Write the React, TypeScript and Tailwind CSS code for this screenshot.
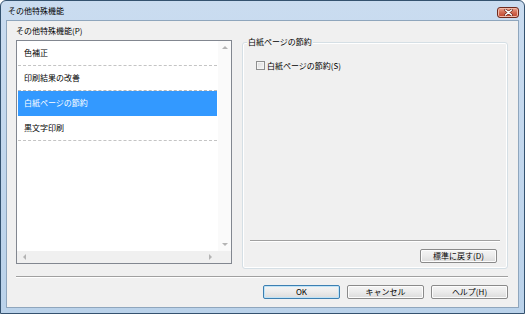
const ITEMS = ["色補正", "印刷結果の改善", "白紙ページの節約", "黒文字印刷"];
const SELECTED = 2;

const JP = "font-['Meiryo_UI','Noto_Sans_CJK_JP',sans-serif]";

function Arrow({ dir }: { dir: "up" | "down" | "left" | "right" }) {
  const pts = {
    up: "0,4 3,1 6,4",
    down: "0,1 3,4 6,1",
    left: "4,0 1,3 4,6",
    right: "1,0 4,3 1,6",
  }[dir];
  const size = dir === "up" || dir === "down" ? { w: 6, h: 5 } : { w: 5, h: 6 };
  return (
    <svg width={size.w} height={size.h} viewBox={`0 0 ${size.w} ${size.h}`}>
      <polygon points={pts} fill="#b4b4b4" />
    </svg>
  );
}

function Button({ label, primary }: { label: string; primary?: boolean }) {
  return (
    <button
      className={`w-[77px] h-[14px] flex items-center justify-center rounded-[2px] border text-[8px] leading-none text-black bg-gradient-to-b from-[#f4f4f4] via-[#ebebeb] to-[#dcdcdc] ${
        primary
          ? "border-[#3c7fb1] shadow-[inset_0_0_0_1px_#bfe3f7]"
          : "border-[#8a8a8a] shadow-[inset_0_0_0_1px_#fcfcfc]"
      }`}
    >
      {label}
    </button>
  );
}

export default function App() {
  return (
    <div
      className={`w-[525px] h-[314px] flex flex-col border border-[#34526f] rounded-t-[6px] overflow-hidden bg-gradient-to-b from-[#cadcf0] to-[#bad2ea] ${JP}`}
    >
      {/* Title bar */}
      <div className="h-[19px] flex items-start justify-between pl-[7px] pr-[5px]">
        <span className="mt-[5px] text-[8px] leading-[10px] text-black">その他特殊機能</span>
        <div className="mt-[6px] w-[22px] h-[11px] rounded-[3px] border border-[#6e2a1e] bg-gradient-to-b from-[#e9a592] via-[#d16a52] to-[#c2422a] flex items-center justify-center shadow-[inset_0_0_0_1px_#f2b9a8]">
          <svg width="9" height="7" viewBox="0 0 9 7">
            <path d="M1.5 1 L7.5 6 M7.5 1 L1.5 6" stroke="#5a1c12" strokeWidth="2.6" strokeLinecap="round" />
            <path d="M1.5 1 L7.5 6 M7.5 1 L1.5 6" stroke="#ffffff" strokeWidth="1.5" strokeLinecap="round" />
          </svg>
        </div>
      </div>

      {/* Client area */}
      <div className="flex-1 mx-[5px] mb-[5px] border border-[#8fa6bd] bg-[#f0f0f0] pt-[3px] pl-[9px] pr-[10px] flex flex-col">
        <div className="flex items-start gap-[10px]">
          {/* Left column: list */}
          <div className="w-[216px] flex flex-col">
            <div className="h-[14px] mb-[2px] text-[8px] leading-[14px] text-black">その他特殊機能(P)</div>
            <div className="h-[224px] border border-[#828790] bg-white flex flex-col">
              <div className="flex-1 flex">
                <div className="flex-1 px-[1px]">
                  {ITEMS.map((item, i) => (
                    <div
                      key={item}
                      className={`h-[25px] flex items-center pl-[6px] border-b border-dashed text-[8px] leading-none ${
                        i === SELECTED
                          ? "bg-[#3399ff] text-white border-[#3399ff]"
                          : i === SELECTED - 1
                            ? "text-black border-[#b8b8b8]"
                            : "text-black border-[#c4c4c4]"
                      }`}
                    >
                      {item}
                    </div>
                  ))}
                </div>
                <div className="w-[13px] bg-[#fafafa] flex flex-col items-center justify-between pt-[4px] pb-[4px]">
                  <Arrow dir="up" />
                  <Arrow dir="down" />
                </div>
              </div>
              <div className="h-[12px] flex bg-[#f0f0f0]">
                <div className="flex-1 flex items-center justify-between pl-[5px] pr-[5px]">
                  <Arrow dir="left" />
                  <Arrow dir="right" />
                </div>
                <div className="w-[13px] bg-[#f0f0f0]" />
              </div>
            </div>
          </div>

          {/* Right column: group box */}
          <div className="mt-[18px] w-[266px] h-[227px] relative rounded-[3px] border border-[#d5dfe5] shadow-[inset_0_0_0_1px_#ffffff] flex flex-col">
            <span className="absolute -top-[6px] left-[4px] px-[1px] bg-[#f0f0f0] text-[8px] leading-[10px] text-black">
              白紙ページの節約
            </span>
            <label className="mt-[18px] ml-[13px] flex items-center gap-[2px] text-[8px] leading-none text-black">
              <span className="w-[9px] h-[9px] border border-[#8e8f8f] bg-gradient-to-br from-[#dcdcdc] to-[#f6f6f6] shadow-[inset_0_0_0_1px_#f4f4f4]" />
              白紙ページの節約(S)
            </label>
            <div className="flex-1" />
            <div className="mx-[7px] h-[2px] border-t border-[#a0a0a0] border-b border-b-white" />
            <div className="flex justify-end mt-[7px] mb-[5px] mr-[10px]">
              <Button label="標準に戻す(D)" />
            </div>
          </div>
        </div>

        {/* Separator */}
        <div className="mt-[7px] h-[2px] border-t border-[#a0a0a0] border-b border-b-white" />

        {/* Dialog buttons */}
        <div className="mt-[7px] flex justify-end gap-[7px]">
          <Button label="OK" primary />
          <Button label="キャンセル" />
          <Button label="ヘルプ(H)" />
        </div>
      </div>
    </div>
  );
}
